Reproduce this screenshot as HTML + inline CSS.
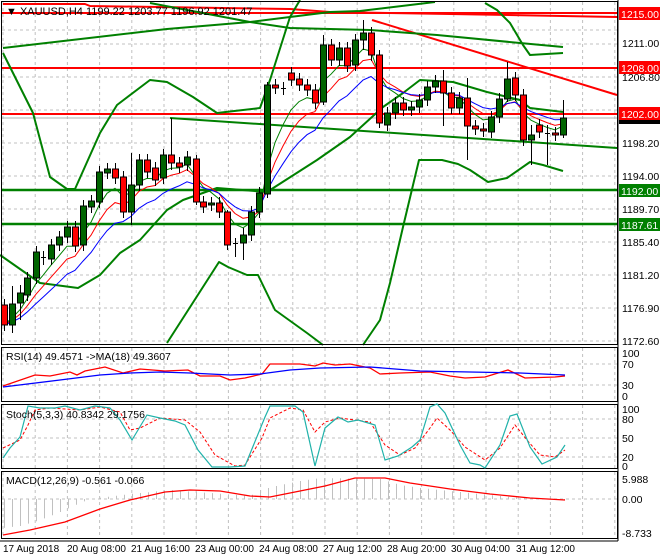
<!DOCTYPE html>
<html><head><meta charset="utf-8"><style>
html,body{margin:0;padding:0;background:#fff;}
svg{display:block;font-family:"Liberation Sans",sans-serif;}
</style></head><body>
<svg id="s" width="660" height="560" xmlns="http://www.w3.org/2000/svg">
<rect width="660" height="560" fill="#fff"/>
<g id="grid" stroke="#c0c0c0" stroke-width="1" stroke-dasharray="3,3"></g>
<g fill="none" stroke-linejoin="round">
<line x1="2" y1="118" x2="617" y2="118" stroke="#b0b0b0" stroke-width="1"/>
<polyline points="3,4 85,4 90,6 290,9 330,12 450,14 617,17" stroke="#ff0000" stroke-width="2"/>
<line x1="2" y1="13" x2="617" y2="13" stroke="#ff0000" stroke-width="2"/>
<line x1="2" y1="68" x2="617" y2="68" stroke="#ff0000" stroke-width="2"/>
<line x1="2" y1="114" x2="617" y2="114" stroke="#ff0000" stroke-width="2"/>
<line x1="372" y1="20" x2="617" y2="95" stroke="#ff0000" stroke-width="2"/>
<line x1="2" y1="190" x2="617" y2="190" stroke="#008000" stroke-width="2.5"/>
<line x1="2" y1="224" x2="617" y2="224" stroke="#008000" stroke-width="2.5"/>
<polyline points="170,118 617,148" stroke="#008000" stroke-width="2"/>
<polyline points="3,48 167,29 250,22 330,12 360,11 435,2" stroke="#008000" stroke-width="2"/>
<polyline points="150,3 250,22 290,28 370,30 437,35 520,43 563,47" stroke="#008000" stroke-width="2"/>
<polyline points="3,53 33,113 50,177 67,189 75,189 100,133 117,105 150,80 167,82 193,97 217,113 260,108 270,80 290,17 300,0" stroke="#008000" stroke-width="2"/>
<polyline points="485,3 497,10 510,23 523,45 530,55 563,53" stroke="#008000" stroke-width="2"/>
<polyline points="167,343 219,262 228,267 247,275 258,275 275,310 307,333 323,345" stroke="#008000" stroke-width="2"/>
<polyline points="363,345 380,320 390,283 403,227 419,160 442,160 458,164 470,170 488,182 507,178 530,162 543,165 563,171" stroke="#008000" stroke-width="2"/>
<polyline points="0,255 40,283 78,288 100,275 120,253 140,240 167,210 183,200 217,188 267,192 317,160 350,137 383,107 403,93 420,80 453,82 487,92 520,100 530,108 563,112" stroke="#008000" stroke-width="2"/>
</g>
<g id="ma" fill="none"></g>
<g id="candles"></g>
<g fill="none" stroke="#000" stroke-width="1">
<rect x="1.5" y="1.5" width="616" height="343"/>
<rect x="1.5" y="347.5" width="616" height="54"/>
<rect x="1.5" y="404.5" width="616" height="64"/>
<rect x="1.5" y="471.5" width="616" height="67"/>
<line x1="618" y1="0" x2="618" y2="541"/>
<line x1="0" y1="541" x2="618" y2="541"/>
</g>
<text x="6" y="15" font-size="11" fill="#000">▼ XAUUSD,H4  1199.22 1203.77 1196.92 1201.47</text>
<polyline fill="none" stroke="#ff0000" stroke-width="1.3" points="3,386 35,375 50,376 70,372 77,375 85,371 105,367 123,373 140,369 165,371 188,370 200,376 220,376 230,380 245,378 262,374 270,364 300,364 315,366 323,363 335,365 350,364 370,368 380,374 400,373 430,372 450,376 465,378 485,377 508,370 525,378 555,377 565,376"/>
<polyline fill="none" stroke="#0000ff" stroke-width="1.3" points="3,387 60,380 100,375 130,373 160,372 190,373 230,375 260,374 290,370 320,368 370,367 420,371 470,372 520,373 565,375"/>
<text x="6" y="360" font-size="10.5" fill="#000">RSI(14) 49.4571  -&gt;MA(18) 49.3607</text>
<polyline fill="none" stroke="#ff0000" stroke-width="1" stroke-dasharray="3,2" points="3,448 20,440 28,425 35,410 50,408 80,410 100,407 120,412 130,430 140,428 160,418 185,420 200,432 215,455 235,466 245,465 262,438 270,418 290,408 303,410 315,432 325,422 340,418 355,420 370,422 385,445 400,455 415,448 430,428 437,418 450,430 465,447 485,460 500,448 515,425 527,440 540,455 555,457 565,450"/>
<polyline fill="none" stroke="#20b2aa" stroke-width="1.2" points="3,458 10,448 20,437 28,406 40,408 55,408 65,406 80,410 95,406 110,408 120,420 132,440 147,415 160,418 175,421 185,425 198,450 212,467 230,467 245,466 265,417 270,406 295,406 303,412 315,466 325,428 338,417 348,422 358,420 375,425 385,460 398,456 412,447 420,440 430,407 437,404 445,413 460,445 470,463 480,465 485,468 500,445 510,416 517,414 530,447 542,464 557,457 565,445"/>
<text x="6" y="418" font-size="10.5" fill="#000">Stoch(5,3,3) 40.8342 29.1756</text>
<g id="hist" stroke="#c0c0c0" stroke-width="1"></g>
<polyline fill="none" stroke="#ff0000" stroke-width="1.3" points="3,535 30,530 65,522 100,509 130,500 165,492 190,490 220,491 250,496 270,497 300,491 325,486 355,478 385,478 410,483 450,489 490,494 530,498 565,500"/>
<text x="6" y="484" font-size="10.5" fill="#000">MACD(12,26,9) -0.561 -0.066</text>
<g font-size="10.5" fill="#000" id="axis">
<text x="622" y="47">1211.00</text>
<text x="622" y="81">1206.80</text>
<text x="622" y="147">1198.20</text>
<text x="622" y="180">1194.00</text>
<text x="622" y="213">1189.70</text>
<text x="622" y="246">1185.40</text>
<text x="622" y="279">1181.20</text>
<text x="622" y="312">1176.90</text>
<text x="622" y="345">1172.60</text>
<rect x="619" y="115" width="41" height="9" fill="#000"/>
<rect x="619" y="7" width="41" height="13" fill="#ff0000"/><text x="621" y="18" fill="#fff">1215.00</text>
<rect x="619" y="61" width="41" height="13" fill="#ff0000"/><text x="621" y="72" fill="#fff">1208.00</text>
<rect x="619" y="107" width="41" height="13" fill="#ff0000"/><text x="621" y="118" fill="#fff">1202.00</text>
<rect x="619" y="184" width="41" height="13" fill="#008000"/><text x="621" y="195" fill="#fff">1192.00</text>
<rect x="619" y="218" width="41" height="13" fill="#008000"/><text x="621" y="229" fill="#fff">1187.61</text>
<text x="622" y="357">100</text><text x="622" y="368">70</text><text x="622" y="389">30</text><text x="622" y="400">0</text>
<text x="622" y="413">100</text><text x="622" y="423">80</text><text x="622" y="442">50</text><text x="622" y="461">20</text><text x="622" y="470">0</text>
<text x="622" y="483">5.988</text><text x="622" y="503">0.00</text><text x="622" y="537">-8.733</text>
</g>
<g font-size="10" fill="#000">
<text x="3" y="552">17 Aug 2018</text>
<text x="67" y="552">20 Aug 08:00</text>
<text x="131" y="552">21 Aug 16:00</text>
<text x="195" y="552">23 Aug 00:00</text>
<text x="259" y="552">24 Aug 08:00</text>
<text x="323" y="552">27 Aug 12:00</text>
<text x="387" y="552">28 Aug 20:00</text>
<text x="451" y="552">30 Aug 04:00</text>
<text x="516" y="552">31 Aug 12:00</text>
</g>
</svg>
<script>
var NS="http://www.w3.org/2000/svg";
function el(p,t,a){var e=document.createElementNS(NS,t);for(var k in a)e.setAttribute(k,a[k]);p.appendChild(e);return e;}
var grid=document.getElementById('grid');
for(var x=3;x<618;x+=32.2){[[2,345],[348,402],[405,469],[472,539]].forEach(function(r){el(grid,'line',{x1:x.toFixed(1),y1:r[0],x2:x.toFixed(1),y2:r[1]});});}
[44,77,110,143,176,209,242,275,308,341,30].forEach(function(y){el(grid,'line',{x1:2,y1:y,x2:617,y2:y});});
[364,385,419,438,457,499].forEach(function(y){el(grid,'line',{x1:2,y1:y,x2:617,y2:y});});
var C=[[4,305,325,'r'],[12,304,325,'g'],[20,293,303,'g'],[27,278,295,'g'],[36,252,278,'g'],[43,257,259,'x'],[51,245,259,'g'],[59,237,245,'g'],[67,227,237,'g'],[75,227,246,'r'],[83,206,245,'g'],[91,201,207,'g'],[99,172,202,'g'],[107,169,173,'g'],[115,169,178,'r'],[123,177,212,'r'],[131,185,212,'g'],[139,160,185,'g'],[147,160,172,'r'],[155,168,180,'r'],[163,155,178,'g'],[171,155,163,'r'],[179,163,167,'r'],[187,157,165,'g'],[196,159,202,'r'],[203,202,207,'r'],[211,203,205,'g'],[219,203,212,'r'],[227,212,245,'r'],[235,243,244,'x'],[243,235,243,'g'],[251,212,235,'g'],[259,193,212,'g'],[267,85,194,'g'],[275,85,88,'r'],[283,88,89,'x'],[291,73,80,'r'],[299,79,85,'r'],[307,85,90,'r'],[315,90,103,'r'],[323,45,102,'g'],[331,45,60,'r'],[339,48,60,'g'],[347,48,66,'r'],[355,40,65,'g'],[363,33,40,'g'],[371,33,55,'r'],[379,55,123,'r'],[387,113,125,'g'],[395,103,113,'g'],[403,103,110,'r'],[411,107,110,'g'],[419,100,107,'g'],[427,87,100,'g'],[435,81,87,'g'],[443,81,93,'r'],[451,93,108,'r'],[459,98,108,'g'],[467,98,126,'r'],[475,126,129,'r'],[483,129,131,'r'],[491,117,132,'g'],[499,99,117,'g'],[507,79,99,'g'],[515,78,95,'r'],[523,95,140,'r'],[531,135,140,'g'],[539,125,132,'r'],[547,133,134,'x'],[555,133,135,'r'],[563,118,135,'g']];
var W={12:[286,333],20:[285,320],171:[118,170],131:[153,225],196:[155,205],227:[210,250],235:[238,257],243:[228,260],267:[82,198],323:[35,105],363:[20,50],379:[50,128],467:[78,160],531:[125,165],563:[100,138],507:[62,102],443:[70,126],547:[125,165]};
var cg=document.getElementById('candles');
var closes=[];
C.forEach(function(c){var x=c[0],t=c[1],b=c[2],k=c[3];var w=W[x]||[t-6,b+6];
el(cg,'line',{x1:x+0.5,y1:w[0],x2:x+0.5,y2:w[1],stroke:'#000','stroke-width':1});
if(k=='x'){el(cg,'line',{x1:x-2,y1:t+0.5,x2:x+3,y2:t+0.5,stroke:'#000'});}
else el(cg,'rect',{x:x-2.5,y:t,width:6,height:Math.max(b-t,2),fill:k=='g'?'#006400':'#ff0000',stroke:'#000','stroke-width':1});
closes.push([x,k=='g'?t:b]);});
var mg=document.getElementById('ma');
[[5,'#008000'],[8,'#ff0000'],[13,'#0000ff']].forEach(function(p){var a=2/(p[0]+1),e=closes[0][1],pts=[];closes.forEach(function(c,i){e=i?e+a*(c[1]-e):c[1];pts.push(c[0]+','+e.toFixed(1));});el(mg,'polyline',{points:pts.join(' '),stroke:p[1],'stroke-width':1,fill:'none'});});
var H=[[3,528],[20,526],[40,520],[60,512],[80,503],[90,499],[130,494],[170,490],[210,493],[250,496],[260,490],[280,485],[300,481],[320,478],[380,479],[400,485],[420,488],[450,491],[480,494],[510,497],[540,499],[566,500]];
function hv(x){for(var i=1;i<H.length;i++){if(x<=H[i][0]){var a=H[i-1],b=H[i];return a[1]+(b[1]-a[1])*(x-a[0])/(b[0]-a[0]);}}return 499;}
var hg=document.getElementById('hist');
for(var x=4;x<566;x+=8){el(hg,'line',{x1:x+0.5,y1:499,x2:x+0.5,y2:hv(x).toFixed(1)});}
</script>
</body></html>
